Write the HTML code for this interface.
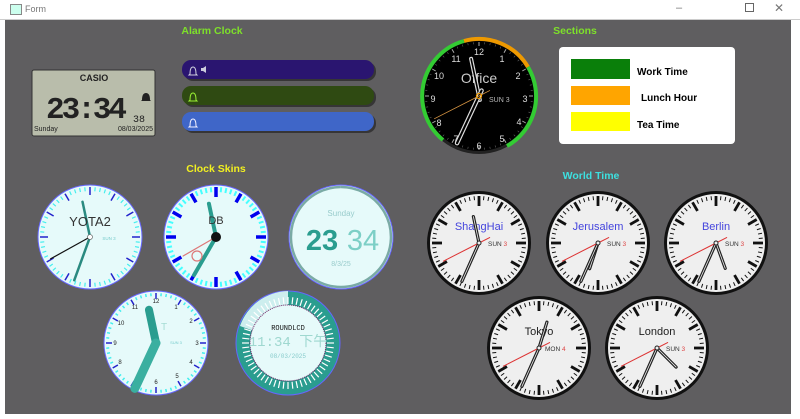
<!DOCTYPE html>
<html><head><meta charset="utf-8"><style>
html,body{margin:0;padding:0;width:800px;height:419px;overflow:hidden;background:#fff;font-family:"Liberation Sans",sans-serif}
#tb{position:absolute;left:0;top:0;width:800px;height:19px;background:#fff;border-bottom:1px solid #ccc;font-size:9px;color:#777}
#main{position:absolute;left:5px;top:20px;width:786px;height:394px;background:#5f5e60}
svg{position:absolute;left:0;top:0}
</style></head><body>
<div id="tb"><span style="position:absolute;left:10px;top:4px;width:10px;height:9px;border:1px solid #888;background:#cfe"></span><span style="position:absolute;left:25px;top:4px">Form</span>
<span style="position:absolute;left:676px;top:2px;font-size:11px">–</span><span style="position:absolute;left:745px;top:3px;width:7px;height:7px;border:1px solid #666"></span><span style="position:absolute;left:774px;top:1px;font-size:12px">✕</span></div>
<div id="main"></div>
<svg id="s" width="800" height="419" viewBox="0 0 800 419" font-family="Liberation Sans, sans-serif">
<g font-weight="bold" font-size="10.5" text-anchor="middle">
<text x="212" y="34" fill="#7ee02a">Alarm Clock</text>
<text x="575" y="34" fill="#7ee02a">Sections</text>
<text x="216" y="172" fill="#f2f020">Clock Skins</text>
<text x="591" y="179" fill="#3de0e0">World Time</text>
</g>
<!-- Casio -->
<rect x="32" y="70" width="123" height="66" rx="2" fill="#b9bdab" stroke="#333" stroke-width="1"/>
<text x="94" y="81" font-size="9" font-weight="bold" text-anchor="middle" fill="#222">CASIO</text>
<text x="85" y="118" font-size="31" font-family="Liberation Mono, monospace" text-anchor="middle" fill="#222" font-weight="bold" letter-spacing="-3">23:34</text>
<text x="133" y="122" font-size="10" fill="#222" font-family="Liberation Mono, monospace">38</text>
<path d="M142 100 q0-7 4-7 q4 0 4 7 l1 1 h-10z" fill="#222"/>
<text x="34" y="131" font-size="7" fill="#222">Sunday</text>
<text x="153" y="131" font-size="7" fill="#222" text-anchor="end">08/03/2025</text>
<!-- alarm bars -->
<g>
<rect x="184" y="62" width="192" height="19" rx="9" fill="#1a1a1a" opacity=".6"/>
<rect x="182" y="60" width="192" height="19" rx="9" fill="#2a1570"/>
<rect x="184" y="88" width="192" height="19" rx="9" fill="#1a1a1a" opacity=".6"/>
<rect x="182" y="86" width="192" height="19" rx="9" fill="#2f4a12"/>
<rect x="184" y="114" width="192" height="19" rx="9" fill="#1a1a1a" opacity=".6"/>
<rect x="182" y="112" width="192" height="19" rx="9" fill="#3f66c8"/>
<path d="M190 74 q0-7 3-7 q3 0 3 7 l1 1 h-8z" fill="none" stroke="#ccd" stroke-width="1"/>
<path d="M201 68 h2 l3-2 v7 l-3-2 h-2z" fill="#ccd"/>
<path d="M190 100 q0-7 3-7 q3 0 3 7 l1 1 h-8z" fill="none" stroke="#9e3" stroke-width="1"/>
<path d="M190 126 q0-7 3-7 q3 0 3 7 l1 1 h-8z" fill="none" stroke="#eef" stroke-width="1"/>
</g>
<!-- sections box -->
<rect x="559" y="47" width="176" height="97" rx="4" fill="#fff"/>
<rect x="571" y="59" width="59" height="20" fill="#0a7f0a"/>
<rect x="571" y="86" width="59" height="19" fill="#ffa500"/>
<rect x="571" y="112" width="59" height="19" fill="#ffff00"/>
<g font-weight="bold" font-size="10" fill="#000">
<text x="637" y="75">Work Time</text><text x="641" y="101">Lunch Hour</text><text x="637" y="128">Tea Time</text>
</g>
<!-- office clock -->
<circle cx="479" cy="96" r="58" fill="#222"/>
<circle cx="479" cy="96" r="55" fill="#000"/>
<path d="M443 140 A57 57 0 0 1 464 41" fill="none" stroke="#3c3" stroke-width="4"/>
<path d="M464 41 A57 57 0 0 1 528 67" fill="none" stroke="#e90" stroke-width="4"/>
<path d="M528 67 A57 57 0 0 1 507 146" fill="none" stroke="#3c3" stroke-width="4"/>
<g id="offt"></g>
<g font-size="9" fill="#ddd" text-anchor="middle">
<text x="479" y="55">12</text><text x="502" y="62">1</text><text x="518" y="79">2</text><text x="525" y="102">3</text><text x="519" y="125">4</text><text x="502" y="142">5</text><text x="479" y="149">6</text><text x="456" y="142">7</text><text x="439" y="126">8</text><text x="433" y="102">9</text><text x="439" y="79">10</text><text x="456" y="62">11</text>
<text x="479" y="83" font-size="14" fill="#ccc">Office</text>
<text x="489" y="102" font-size="7" text-anchor="start" fill="#bbb">SUN 3</text>
</g>
<g id="offh"></g>
<!-- skins -->
<g id="skins"></g>
<g text-anchor="middle">
<text x="90" y="226" font-size="13" fill="#333">YOTA2</text><text x="109" y="240" font-size="4.5" fill="#7cc">SUN 3</text>
<text x="216" y="224" font-size="11" fill="#333">DB</text>
<text x="341" y="216" font-size="8" fill="#9cc">Sunday</text>
<text x="322" y="250" font-size="29" font-weight="bold" fill="#2a9d8f">23</text>
<text x="363" y="250" font-size="29" fill="#7ccfc6">34</text>
<text x="341" y="266" font-size="7" fill="#9cc">8/3/25</text>
<g font-size="6" fill="#222"><text x="156" y="303">12</text><text x="176" y="309">1</text><text x="191" y="323">2</text><text x="197" y="345">3</text><text x="191" y="364">4</text><text x="177" y="378">5</text><text x="156" y="384">6</text><text x="120" y="364">8</text><text x="115" y="345">9</text><text x="121" y="325">10</text><text x="135" y="309">11</text></g>
<text x="164" y="330" font-size="10" fill="#a5dcd4">T</text><text x="176" y="344" font-size="4" fill="#7cc">SUN 3</text>
<text x="288" y="330" font-size="7" fill="#111" font-family="Liberation Mono, monospace">ROUNDLCD</text>
<text x="288" y="346" font-size="14" fill="#9fd8d0" font-family="Liberation Mono, monospace">11:34 下午</text>
<text x="288" y="358" font-size="6" fill="#8cc" font-family="Liberation Mono, monospace">08/03/2025</text>
</g>
<!-- world -->
<g id="world"></g>
<g text-anchor="middle" font-size="11">
<text x="479" y="230" fill="#44d">ShangHai</text><text x="598" y="230" fill="#44d">Jerusalem</text><text x="716" y="230" fill="#44d">Berlin</text>
<text x="539" y="335" fill="#222">Tokyo</text><text x="657" y="335" fill="#222">London</text>
<g font-size="6.5" text-anchor="start" fill="#333">
<text x="488" y="246">SUN <tspan fill="#d44">3</tspan></text><text x="607" y="246">SUN <tspan fill="#d44">3</tspan></text><text x="725" y="246">SUN <tspan fill="#d44">3</tspan></text>
<text x="545" y="351">MON <tspan fill="#d44">4</tspan></text><text x="666" y="351">SUN <tspan fill="#d44">3</tspan></text></g>
</g>
<g id="wh"></g>
</svg>
<script>
var NS="http://www.w3.org/2000/svg";
function el(p,t,a){var e=document.createElementNS(NS,t);for(var k in a)e.setAttribute(k,a[k]);document.getElementById(p).appendChild(e);return e;}
function ticks(p,cx,cy,r1,r2,n,w,col,every,r3,w2,col2){for(var i=0;i<n;i++){var a=i*2*Math.PI/n,big=every&&i%every==0;var ri=big?r3:r2;el(p,"line",{x1:cx+r1*Math.sin(a),y1:cy-r1*Math.cos(a),x2:cx+ri*Math.sin(a),y2:cy-ri*Math.cos(a),stroke:big?col2:col,"stroke-width":big?w2:w});}}
function hand(p,cx,cy,deg,len,tail,w,col,outline){var a=deg*Math.PI/180,s=Math.sin(a),c=Math.cos(a);var o={x1:cx-tail*s,y1:cy+tail*c,x2:cx+len*s,y2:cy-len*c,stroke:col,"stroke-width":w,"stroke-linecap":"round"};el(p,"line",o);if(outline){o.stroke=outline;o["stroke-width"]=w-2.4;el(p,"line",o);}}
// office
ticks("offt",479,96,54,52,60,0.6,"#666",5,50,1,"#aaa");
hand("offh",479,96,-12,38,4,4,"#ddd","#000");hand("offh",479,96,205,52,6,4.5,"#ddd","#000");hand("offh",479,96,243,50,-0,0.8,"#d94");hand("offh",479,96,63,12,0,0.8,"#d94");
el("offh","circle",{cx:479,cy:96,r:2.5,fill:"none",stroke:"#e90","stroke-width":1.2});
// skins faces
function face(cx,cy,r,fill,stroke){el("skins","circle",{cx:cx,cy:cy,r:r,fill:fill,stroke:stroke,"stroke-width":1});}
face(90,237,52,"#e6fafa","#66f");ticks("skins",90,237,50,46,60,1.2,"#4ee",5,42,1.5,"#22c");
hand("skins",90,237,-12,36,0,2.5,"#2a8a80");hand("skins",90,237,200,46,0,2.5,"#2a8a80");hand("skins",90,237,241,45,0,1.2,"#111");
el("skins","circle",{cx:90,cy:237,r:2.5,fill:"#fff",stroke:"#555","stroke-width":0.6});
face(216,237,52,"#e6fafa","#66f");ticks("skins",216,237,50,45,60,2,"#4ff",5,40,3.5,"#00e");
hand("skins",216,237,-12,34,0,4,"#2a9d8f");hand("skins",216,237,210,44,0,4,"#2a9d8f");hand("skins",216,237,240,38,0,1.2,"#d77");
el("skins","circle",{cx:197,cy:256,r:5,fill:"none",stroke:"#d77","stroke-width":1.2});el("skins","circle",{cx:216,cy:237,r:5,fill:"#111"});
face(341,237,52,"#e6fafa","#66f");el("skins","path",{d:"M341 187 A50 50 0 1 1 340.9 187",fill:"none",stroke:"#7aaaa5","stroke-width":2.5});
face(156,343,52,"#e6fafa","#66f");ticks("skins",156,343,50,47,60,1.5,"#4ee",5,44,1.5,"#22c");
hand("skins",156,343,-12,34,0,8,"#2a9d8f");hand("skins",156,343,205,50,0,9,"#3aafa0");
el("skins","circle",{cx:288,cy:343,r:52,fill:"#2a9d8f",stroke:"#66f","stroke-width":1});
el("skins","path",{d:"M288 291 A52 52 0 0 0 240 326 L288 343z",fill:"#cdeeee"});
ticks("skins",288,343,46,39,60,1.2,"#fff");
el("skins","circle",{cx:288,cy:343,r:38,fill:"#e6fafa",stroke:"#726","stroke-width":1,"stroke-dasharray":"1 1"});
// world
var W=[[479,243,-12,204],[598,243,198,204],[716,243,160,204],[539,348,17,204],[657,348,135,204]];
W.forEach(function(w){el("world","circle",{cx:w[0],cy:w[1],r:52,fill:"#111"});el("world","circle",{cx:w[0],cy:w[1],r:49,fill:"#efefef"});
ticks("world",w[0],w[1],47,43,60,1,"#111",5,37,2.8,"#111");
hand("wh",w[0],w[1],w[2],27,0,3.2,"#222","#eee");hand("wh",w[0],w[1],w[3],42,0,3.2,"#222","#eee");
hand("wh",w[0],w[1],243,40,-0,1,"#d33");hand("wh",w[0],w[1],63,12,0,1,"#d33");
el("wh","circle",{cx:w[0],cy:w[1],r:2,fill:"#eee",stroke:"#222","stroke-width":1});});
</script>
</body></html>
